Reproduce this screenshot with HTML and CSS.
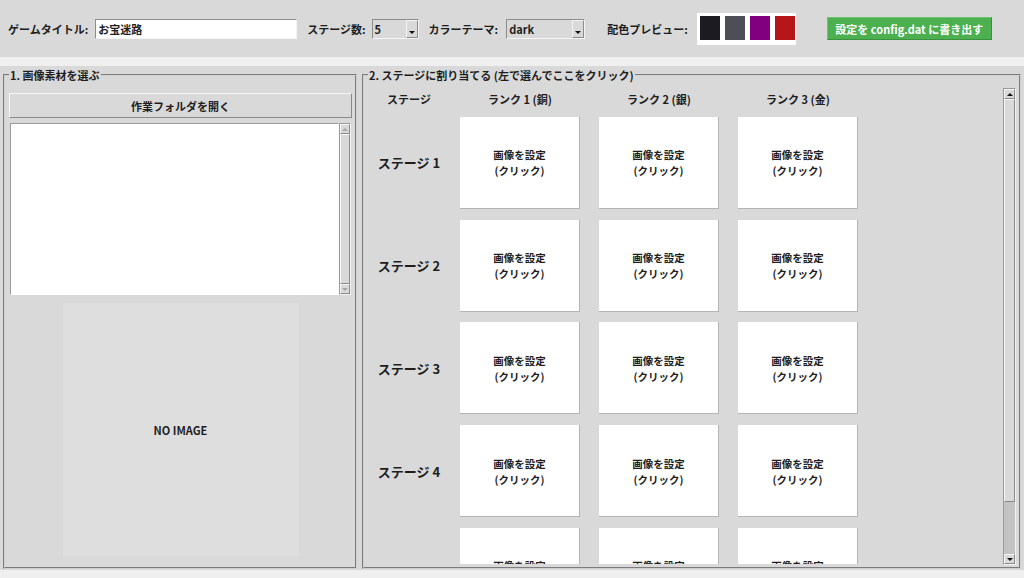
FILE: index.html
```
<!DOCTYPE html>
<html lang="ja">
<head>
    <meta charset="UTF-8">
    <title>ステージ画像設定</title>
    <link rel="stylesheet" href="styles.css">
</head>
<body>
    <div class="toolbar">
        <span class="lbl lbl-title">ゲームタイトル:</span>
        <div class="entry">お宝迷路</div>
        <span class="lbl lbl-stages">ステージ数:</span>
        <div class="combo combo-stages"><span class="combo-text">5</span><span class="combo-btn"><i class="tri-down"></i></span></div>
        <span class="lbl lbl-theme">カラーテーマ:</span>
        <div class="combo combo-theme"><span class="combo-text">dark</span><span class="combo-btn"><i class="tri-down"></i></span></div>
        <span class="lbl lbl-palette">配色プレビュー:</span>
        <div class="swatches">
            <span class="swatch" style="background:#1c1b21"></span>
            <span class="swatch" style="background:#4e4e56"></span>
            <span class="swatch" style="background:#800080"></span>
            <span class="swatch" style="background:#b5161a"></span>
        </div>
        <button class="btn-save">設定を config.dat に書き出す</button>
    </div>

    <div class="main">
        <fieldset class="group group-left">
            <legend>1. 画像素材を選ぶ</legend>
            <button class="btn-open">作業フォルダを開く</button>
            <div class="listbox">
                <div class="list"></div>
                <div class="vscroll vscroll-small">
                    <div class="sb-arrow"><i class="tri-up dim"></i></div>
                    <div class="sb-thumb"></div>
                    <div class="sb-arrow"><i class="tri-down dim"></i></div>
                </div>
            </div>
            <div class="preview">NO IMAGE</div>
        </fieldset>

        <fieldset class="group group-right">
            <legend>2. ステージに割り当てる (左で選んでここをクリック)</legend>
            <div class="board">
                <div class="canvas">
                    <div class="grid">
                        <div class="head">ステージ</div>
                        <div class="head">ランク 1 (銅)</div>
                        <div class="head">ランク 2 (銀)</div>
                        <div class="head">ランク 3 (金)</div>

                        <div class="stage">ステージ 1</div>
                        <div class="slot">画像を設定<br>(クリック)</div>
                        <div class="slot">画像を設定<br>(クリック)</div>
                        <div class="slot">画像を設定<br>(クリック)</div>

                        <div class="stage">ステージ 2</div>
                        <div class="slot">画像を設定<br>(クリック)</div>
                        <div class="slot">画像を設定<br>(クリック)</div>
                        <div class="slot">画像を設定<br>(クリック)</div>

                        <div class="stage">ステージ 3</div>
                        <div class="slot">画像を設定<br>(クリック)</div>
                        <div class="slot">画像を設定<br>(クリック)</div>
                        <div class="slot">画像を設定<br>(クリック)</div>

                        <div class="stage">ステージ 4</div>
                        <div class="slot">画像を設定<br>(クリック)</div>
                        <div class="slot">画像を設定<br>(クリック)</div>
                        <div class="slot">画像を設定<br>(クリック)</div>

                        <div class="stage">ステージ 5</div>
                        <div class="slot">画像を設定<br>(クリック)</div>
                        <div class="slot">画像を設定<br>(クリック)</div>
                        <div class="slot">画像を設定<br>(クリック)</div>
                    </div>
                </div>
                <div class="vscroll vscroll-big">
                    <div class="sb-arrow"><i class="tri-up"></i></div>
                    <div class="sb-thumb"></div>
                    <div class="sb-trough"></div>
                    <div class="sb-arrow"><i class="tri-down"></i></div>
                </div>
            </div>
        </fieldset>
    </div>
</body>
</html>
```

FILE: styles.css
```
* {
    box-sizing: border-box;
}
body {
    margin: 0;
    width: 1024px;
    height: 578px;
    overflow: hidden;
    background: #efefef;
    font-family: "Noto Sans CJK JP", "Noto Sans", sans-serif;
    font-size: 11px;
    font-weight: bold;
    color: #1e1e1e;
}

/* top bar */
.toolbar {
    height: 57px;
    background: #d9d9d9;
    display: flex;
    align-items: center;
    padding-left: 8px;
    white-space: nowrap;
}
.lbl-title { margin-right: 7px; }
.lbl-stages { margin-right: 6px; }
.lbl-theme { margin-right: 8px; }
.lbl-palette { margin-right: 9px; }

.entry {
    width: 202px;
    height: 20px;
    margin-right: 10px;
    padding-left: 2px;
    line-height: 18px;
    background: #fff;
    border: 1px solid;
    border-color: #8c8c8c #f4f4f4 #f4f4f4 #8c8c8c;
}
.combo {
    height: 20px;
    display: flex;
    background: #d9d9d9;
    border: 1px solid;
    border-color: #8c8c8c #f4f4f4 #f4f4f4 #8c8c8c;
}
.combo-stages { width: 47px; margin-right: 10px; }
.combo-theme { width: 79px; margin-right: 22px; }
.combo-text {
    flex: 1;
    padding-left: 2px;
    line-height: 18px;
}
.combo-btn {
    width: 12px;
    display: flex;
    align-items: flex-end;
    justify-content: center;
    padding-bottom: 3px;
    border: 1px solid;
    border-color: #f4f4f4 #8c8c8c #8c8c8c #f4f4f4;
}

.tri-down, .tri-up {
    display: block;
    width: 0;
    height: 0;
    border-left: 3px solid transparent;
    border-right: 3px solid transparent;
}
.tri-down { border-top: 3px solid #111; }
.tri-up { border-bottom: 3px solid #111; }
.tri-down.dim { border-top-color: #a8a8a8; }
.tri-up.dim { border-bottom-color: #a8a8a8; }

.swatches {
    display: flex;
    gap: 5px;
    padding: 3px 1px 5px 3px;
    background: #fff;
    margin-right: 31px;
}
.swatch {
    width: 20px;
    height: 24px;
}
.btn-save {
    width: 165px;
    height: 23px;
    padding: 0;
    font: inherit;
    color: #fff;
    background: #4caf50;
    border: 1px solid;
    border-color: #6cc46f #3d8f40 #3d8f40 #6cc46f;
}

/* panels */
.main {
    margin-top: 9px;
    height: 504px;
    background: #d9d9d9;
    display: flex;
    gap: 5px;
    padding: 2px 3px 1px;
}
.group {
    margin: 0;
    padding: 0 3px 0 4px;
    min-width: 0;
    border: 2px groove #d0d0d0;
}
.group legend {
    padding: 0 1px;
    line-height: 14px;
    background: #d9d9d9;
}
.group-left {
    width: 354px;
    flex: none;
}
.group-right {
    flex: 1;
}

.btn-open {
    display: block;
    width: 100%;
    height: 25px;
    margin-top: 11px;
    padding: 0;
    font: inherit;
    color: inherit;
    background: #d9d9d9;
    border: 1px solid;
    border-color: #f6f6f6 #8a8a8a #8a8a8a #f6f6f6;
}
.listbox {
    display: flex;
    height: 172px;
    margin: 5px 1px 0 1px;
}
.list {
    flex: 1;
    background: #fff;
    border: 1px solid;
    border-color: #9a9a9a #fff #fff #9a9a9a;
}
.preview {
    width: 236px;
    height: 253px;
    margin: 8px auto 0;
    background: #dedede;
    display: flex;
    align-items: center;
    justify-content: center;
}

/* scrollbars */
.vscroll {
    display: flex;
    flex-direction: column;
    background: #c3c3c3;
    border: 1px solid;
    border-color: #9a9a9a #f2f2f2 #f2f2f2 #9a9a9a;
}
.vscroll-small {
    width: 12px;
}
.vscroll-big {
    width: 13px;
    height: 477px;
}
.sb-arrow {
    height: 10px;
    display: flex;
    align-items: center;
    justify-content: center;
    background: #d9d9d9;
    border: 1px solid;
    border-color: #f6f6f6 #8a8a8a #8a8a8a #f6f6f6;
}
.sb-thumb {
    flex: 1;
    background: #d9d9d9;
    border: 1px solid;
    border-color: #f6f6f6 #8a8a8a #8a8a8a #f6f6f6;
}
.vscroll-big .sb-thumb {
    flex: none;
    height: 403px;
}
.sb-trough {
    flex: 1;
}

/* stage board */
.board {
    display: flex;
    height: 477px;
    margin-top: 6px;
}
.canvas {
    flex: 1;
    height: 476px;
    overflow: hidden;
    padding-left: 9px;
}
.grid {
    display: grid;
    grid-template-columns: 64px repeat(3, 120px);
    grid-template-rows: 18px repeat(5, 92px);
    column-gap: 19px;
    row-gap: 10.75px;
}
.head {
    align-self: end;
    justify-self: center;
    line-height: 14px;
    white-space: nowrap;
}
.stage {
    align-self: center;
    justify-self: center;
    font-size: 13px;
    white-space: nowrap;
}
.slot {
    display: flex;
    flex-direction: column;
    align-items: center;
    justify-content: center;
    text-align: center;
    font-size: 10.5px;
    line-height: 16px;
    padding-top: 2px;
    background: #fff;
    border-right: 1px solid #b4b4b4;
    border-bottom: 1px solid #b4b4b4;
}
```
